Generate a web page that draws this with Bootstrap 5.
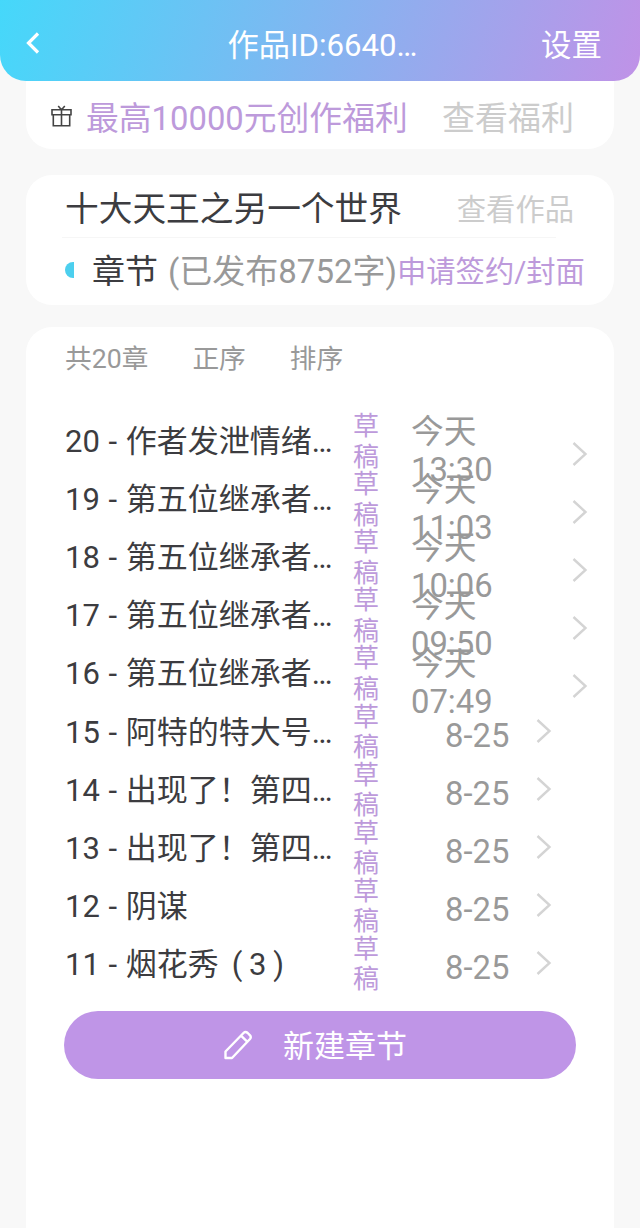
<!DOCTYPE html>
<html lang="zh-CN">
<head>
    <meta charset="UTF-8">
    <meta name="viewport" content="width=device-width, initial-scale=1.0">
    <title>作品管理</title>
    <link href="https://cdn.jsdelivr.net/npm/bootstrap@5.3.0/dist/css/bootstrap.min.css" rel="stylesheet">
    <script src="https://cdn.jsdelivr.net/npm/bootstrap@5.3.0/dist/js/bootstrap.bundle.min.js"></script>
    <style>
        body {
            font-family: Roboto, "Noto Sans CJK SC", sans-serif;
            font-size: 33px;
            line-height: 38px;
            color: #3c3c40;
            background: #f8f8f8;
            height: 1228px;
            overflow: hidden;
        }
        .topbar {
            height: 81px;
            padding: 11px 38px 0 26px;
            font-size: 30.5px;
            border-radius: 0 0 26px 26px;
            background: linear-gradient(106deg, #45d8fa 0%, #c092e7 100%);
        }
        .topbar .side {
            width: 101px;
        }
        .topbar-title {
            font-size: 31.2px;
            padding-left: 17px;
        }
        .panel {
            margin: 0 26px;
            background: #fff;
            border-radius: 26px;
        }
        .welfare {
            height: 68px;
            padding: 7px 40px 0 25px;
            border-radius: 0 0 26px 26px;
        }
        .welfare-icon {
            margin: -5px 14px 0 0;
        }
        .welfare-text {
            font-size: 32.8px;
        }
        .work {
            height: 130px;
            margin-top: 26px;
        }
        .work-title {
            height: 62px;
            padding: 7px 40px 0 39px;
            font-size: 33.7px;
        }
        .work-line {
            height: 1px;
            margin: 0 58px 0 36px;
            background: #f6f6f6;
        }
        .work-info {
            height: 66px;
            padding: 1px 0 0 39px;
        }
        .half-dot {
            width: 9px;
            height: 16px;
            margin: -4px 18px 0 0;
            border-radius: 9px 0 0 9px;
            background: #4ccfee;
        }
        .word-count {
            margin-left: 10px;
        }
        .chapters {
            height: 901px;
            margin-top: 22px;
            padding: 12px 38px 0 39px;
            border-radius: 26px 26px 0 0;
        }
        .sorts {
            height: 40px;
            gap: 44px;
            font-size: 26.7px;
            margin-bottom: 33px;
        }
        .chapter {
            height: 58.1px;
        }
        .chapter-name {
            width: 288px;
            padding-top: 2px;
            font-size: 31px;
            word-spacing: 1px;
        }
        .paren {
            word-spacing: -1px;
            margin-left: 13px;
        }
        .draft {
            width: 27px;
            padding-top: 1px;
            font-size: 26px;
            line-height: 30.5px;
        }
        .chapter-date {
            width: 83px;
            margin: 20px 0 0 31px;
            font-size: 32.8px;
        }
        .chapter-date.short {
            width: 66px;
            margin: 9px 0 0 65px;
        }
        .arrow {
            margin: 26px 0 0 78px;
        }
        .short + .arrow {
            margin: -1px 0 0 25px;
        }
        .new-btn, .new-btn:hover {
            width: 512px;
            height: 68px;
            margin: 18px 0 0 -1px;
            padding-right: 21px;
            font-size: 31px;
            color: #fff;
            background: #bf95e7;
        }
        .new-btn span {
            padding-top: 4px;
        }
        .purple { color: #bd9adb; }
        .gray { color: #999; }
        .pale { color: #ccc; }
        .fs-29 { font-size: 29.3px; }
    </style>
</head>
<body>
    <header class="topbar d-flex align-items-center justify-content-between text-white">
        <div class="side d-flex">
            <svg width="14" height="22" viewBox="0 0 14 22" fill="none" stroke="#fff" stroke-width="3.2" style="margin-top:-7px"><path d="M12 1.5L2.5 11L12 20.5"/></svg>
        </div>
        <div class="topbar-title">作品ID:6640…</div>
        <div class="side text-end">设置</div>
    </header>

    <section class="panel welfare d-flex align-items-center text-nowrap">
        <svg class="welfare-icon" width="21" height="22" viewBox="0 0 21 22" fill="none" stroke="#444" stroke-width="1.6"><path d="M1 4.7H20V9.7H1ZM2.3 9.7V20.7H18.7V9.7M10.5 4.7V20.7M7.2 1L10.5 4.7L13.8 1"/></svg>
        <span class="purple welfare-text">最高10000元创作福利</span>
        <span class="pale ms-auto">查看福利</span>
    </section>

    <section class="panel work text-nowrap">
        <div class="work-title d-flex align-items-center justify-content-between">
            <span>十大天王之另一个世界</span>
            <span class="pale fs-29">查看作品</span>
        </div>
        <div class="work-line"></div>
        <div class="work-info d-flex align-items-center">
            <span class="half-dot"></span>
            <span>章节</span>
            <span class="gray word-count">(已发布8752字)</span>
            <span class="purple fs-29">申请签约/封面</span>
        </div>
    </section>

    <section class="panel chapters">
        <div class="sorts d-flex align-items-center gray">
            <span>共20章</span>
            <span>正序</span>
            <span>排序</span>
        </div>
        <div id="chapterList"></div>
        <button class="new-btn btn border-0 rounded-pill d-flex align-items-center justify-content-center">
            <svg width="28" height="30" viewBox="0 0 28 30" fill="none" stroke="#fff" stroke-width="2.4" stroke-linejoin="round" style="margin-right:31px"><path d="M1.5 28V21.5L19.5 3Q21.5 1 23.7 3L26 5.3Q27.5 7.2 26 9L8 28Z M17 5.7L23.4 11.8"/></svg>
            <span>新建章节</span>
        </button>
    </section>

    <script>
        const chapters = [
            ['20 - 作者发泄情绪…', '今天 13:30'],
            ['19 - 第五位继承者…', '今天 11:03'],
            ['18 - 第五位继承者…', '今天 10:06'],
            ['17 - 第五位继承者…', '今天 09:50'],
            ['16 - 第五位继承者…', '今天 07:49'],
            ['15 - 阿特的特大号…', '8-25'],
            ['14 - 出现了！第四…', '8-25'],
            ['13 - 出现了！第四…', '8-25'],
            ['12 - 阴谋', '8-25'],
            ['11 - 烟花秀<span class="paren">( 3 )</span>', '8-25']
        ];

        document.getElementById('chapterList').innerHTML = chapters.map(([name, date]) => `
            <div class="chapter d-flex align-items-center">
                <div class="chapter-name text-nowrap flex-shrink-0">${name}</div>
                <div class="draft purple flex-shrink-0">草稿</div>
                <div class="chapter-date gray flex-shrink-0 ${date.includes(':') ? '' : 'short text-nowrap'}">${date}</div>
                <svg class="arrow flex-shrink-0" width="16" height="24" viewBox="0 0 16 24" fill="none" stroke="#d4d4d4" stroke-width="2.4"><path d="M1.5 1L13.5 12L1.5 23"/></svg>
            </div>`).join('');
    </script>
</body>
</html>
